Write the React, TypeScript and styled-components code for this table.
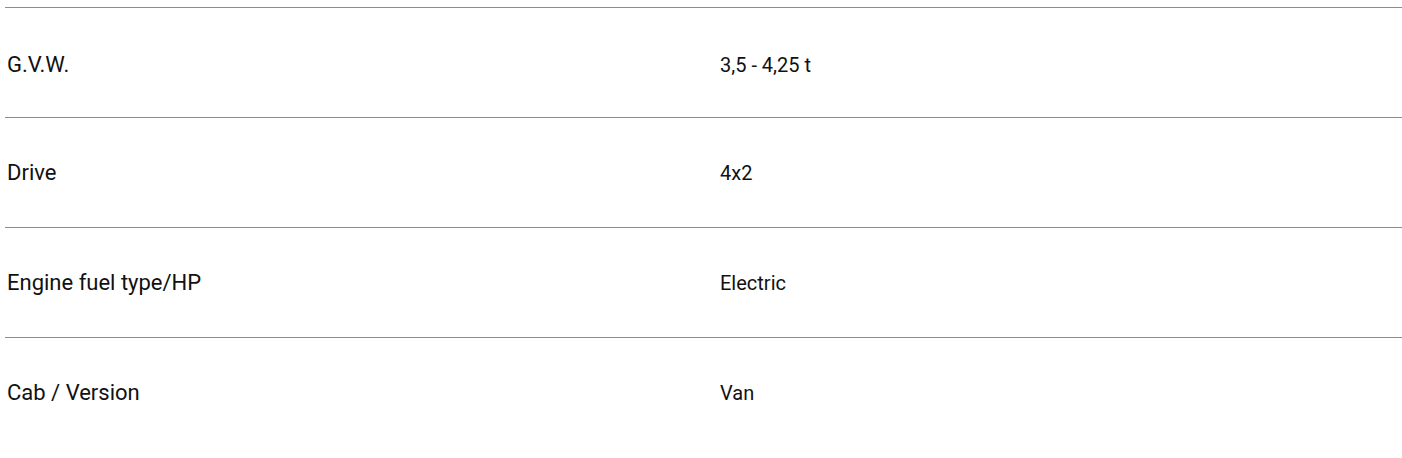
import React from 'react'
import styled, { createGlobalStyle } from 'styled-components'

const specs = [
  { label: 'G.V.W.', value: '3,5 - 4,25 t' },
  { label: 'Drive', value: '4x2' },
  { label: 'Engine fuel type/HP', value: 'Electric' },
  { label: 'Cab / Version', value: 'Van' },
]

export default function App() {
  return (
    <>
      <GlobalStyle />
      <Table>
        {specs.map((s) => (
          <Row key={s.label}>
            <Label>{s.label}</Label>
            <Value>{s.value}</Value>
          </Row>
        ))}
      </Table>
    </>
  )
}

const GlobalStyle = createGlobalStyle`
  html, body {
    margin: 0;
    padding: 0;
    background: #fff;
    font-family: Roboto, "Liberation Sans", Arial, sans-serif;
    color: #111;
  }
`

const Table = styled.div`
  display: flex;
  flex-direction: column;
  margin: 7px 0 0 5px;
`

const Row = styled.div`
  display: grid;
  grid-template-columns: 715px 1fr;
  align-items: center;
  height: 109px;
  box-sizing: content-box;
  border-top: 1px solid #8c8c8c;
  &:first-child {
    padding-top: 4px;
    height: 105px;
  }
`

const Label = styled.div`
  padding-left: 2px;
  font-size: 22px;
  color: #111;
`

const Value = styled.div`
  font-size: 20px;
  color: #111;
`
